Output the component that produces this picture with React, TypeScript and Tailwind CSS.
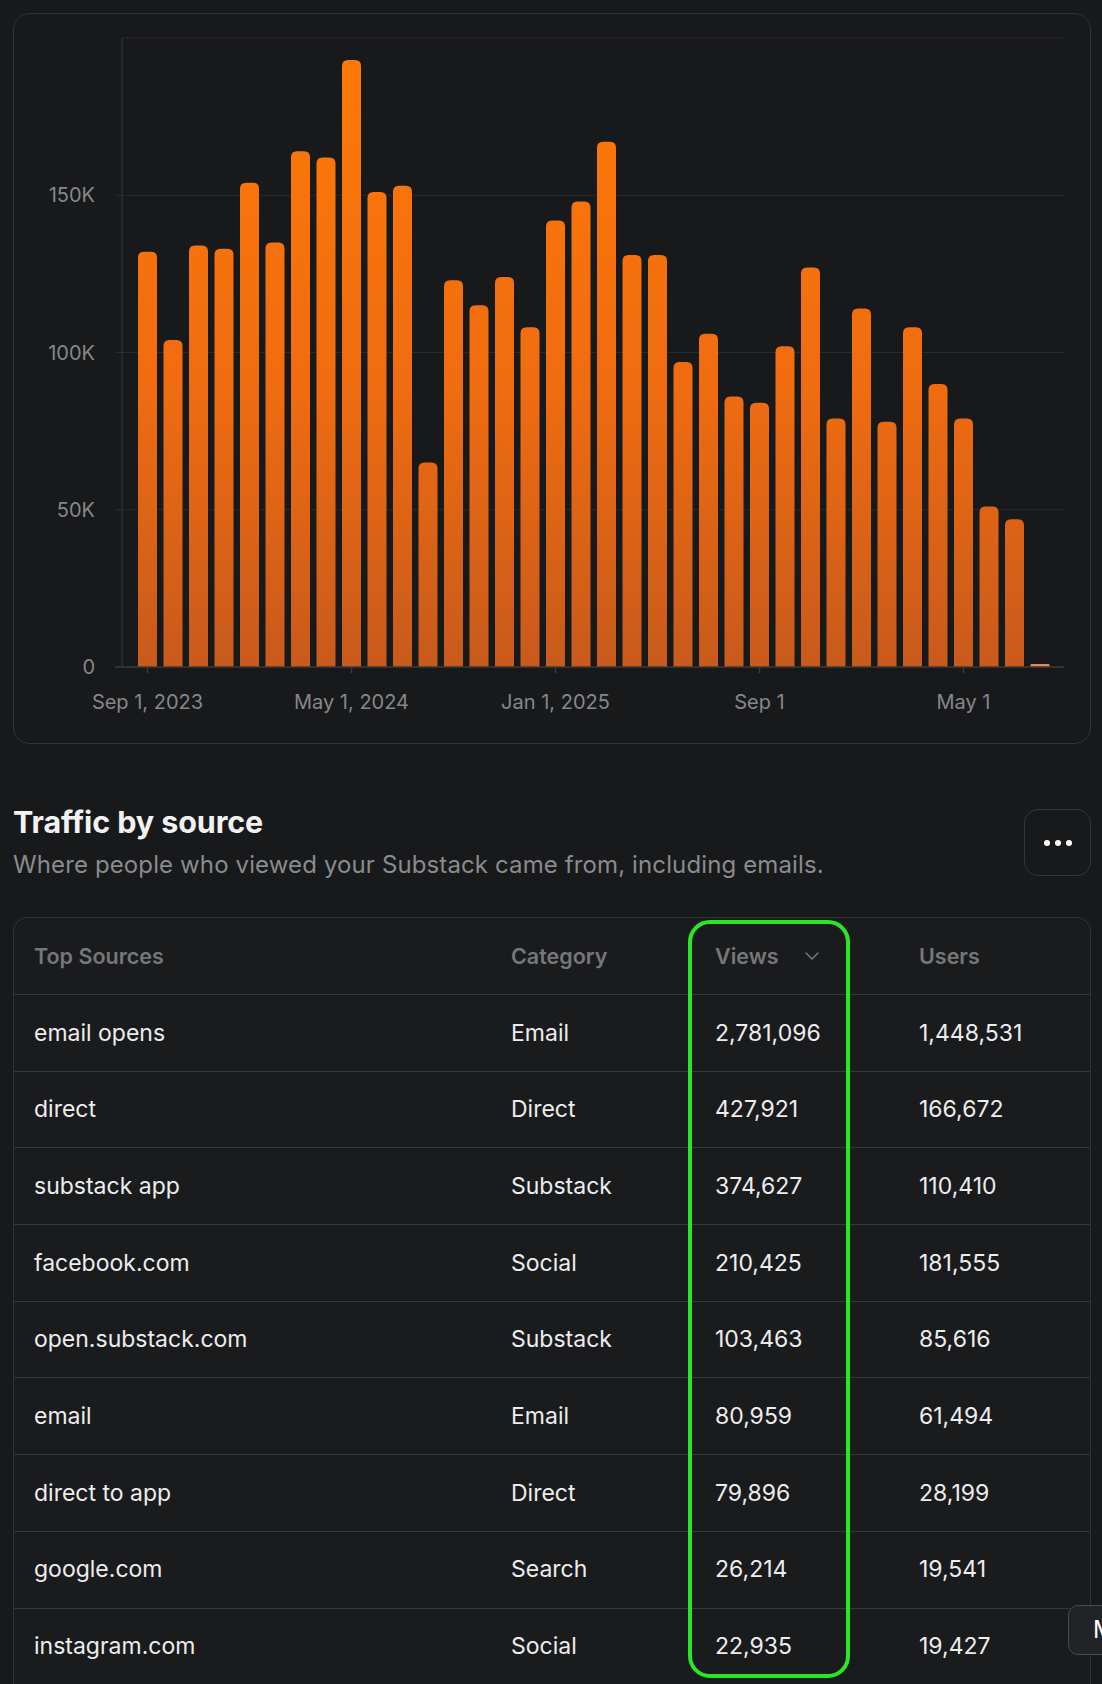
import React from 'react';
import { ChevronDown } from 'lucide-react';

// monthly views in thousands, Sep 2023 onward
const barValues = [
  132, 104, 134, 133, 154, 135, 164, 162, 193, 151, 153, 65, 123, 115, 124, 108, 142, 148,
  167, 131, 131, 97, 106, 86, 84, 102, 127, 79, 114, 78, 108, 90, 79, 51, 47, 0.7,
];

const rows = [
  { source: 'email opens', category: 'Email', views: '2,781,096', users: '1,448,531' },
  { source: 'direct', category: 'Direct', views: '427,921', users: '166,672' },
  { source: 'substack app', category: 'Substack', views: '374,627', users: '110,410' },
  { source: 'facebook.com', category: 'Social', views: '210,425', users: '181,555' },
  { source: 'open.substack.com', category: 'Substack', views: '103,463', users: '85,616' },
  { source: 'email', category: 'Email', views: '80,959', users: '61,494' },
  { source: 'direct to app', category: 'Direct', views: '79,896', users: '28,199' },
  { source: 'google.com', category: 'Search', views: '26,214', users: '19,541' },
  { source: 'instagram.com', category: 'Social', views: '22,935', users: '19,427' },
];

const PLOT_TOP = 38;
const BASE = 667;
const AXIS_X = 122;
const PLOT_RIGHT = 1064;
const FIRST_BAR = 138;
const STEP = 25.5;
const BAR_W = 19;

const yTicks = [
  { label: '150K', v: 150 },
  { label: '100K', v: 100 },
  { label: '50K', v: 50 },
  { label: '0', v: 0 },
];

const xTicks = [
  { label: 'Sep 1, 2023', i: 0 },
  { label: 'May 1, 2024', i: 8 },
  { label: 'Jan 1, 2025', i: 16 },
  { label: 'Sep 1', i: 24 },
  { label: 'May 1', i: 32 },
];

const yFor = (v: number) => BASE - (v / 200) * (BASE - PLOT_TOP);

const barPath = (x: number, top: number) => {
  const h = BASE - top;
  const r = Math.min(6, h / 2, BAR_W / 2);
  return `M${x},${BASE} L${x},${top + r} Q${x},${top} ${x + r},${top} L${x + BAR_W - r},${top} Q${x + BAR_W},${top} ${x + BAR_W},${top + r} L${x + BAR_W},${BASE} Z`;
};

const ViewsChart: React.FC = () => (
  <svg className="block w-full h-full" viewBox="14 14 1076 729" fontFamily="Inter, 'Liberation Sans', sans-serif">
    <defs>
      <linearGradient id="barFill" gradientUnits="userSpaceOnUse" x1="0" y1={PLOT_TOP} x2="0" y2={BASE}>
        <stop offset="0" stopColor="#ff7a06" />
        <stop offset="0.55" stopColor="#f06c10" />
        <stop offset="1" stopColor="#c85a1c" />
      </linearGradient>
    </defs>

    {/* grid */}
    {[200, 150, 100, 50].map((v) => (
      <line key={v} x1={v === 200 ? AXIS_X : AXIS_X - 7} x2={PLOT_RIGHT} y1={yFor(v)} y2={yFor(v)} stroke="#2a2b2e" strokeWidth="1" />
    ))}
    <line x1={AXIS_X} x2={AXIS_X} y1={PLOT_TOP} y2={BASE} stroke="#37383b" strokeWidth="1" />

    {yTicks.map((t) => (
      <text key={t.label} x="95" y={yFor(t.v) + 7} textAnchor="end" fontSize="20" fill="#86878a">
        {t.label}
      </text>
    ))}

    {/* bars */}
    {barValues.map((v, i) => {
      const x = FIRST_BAR + i * STEP;
      if (v < 2) {
        return <rect key={i} x={x} y={BASE - 3} width={BAR_W} height={3} rx={1} fill="#e98a55" />;
      }
      return <path key={i} d={barPath(x, yFor(v))} fill="url(#barFill)" />;
    })}

    <line x1={AXIS_X - 7} x2={PLOT_RIGHT} y1={BASE} y2={BASE} stroke="#3a3b3e" strokeWidth="1.5" />

    {xTicks.map((t) => {
      const cx = FIRST_BAR + t.i * STEP + BAR_W / 2;
      return (
        <g key={t.label}>
          <line x1={cx} x2={cx} y1={BASE} y2={BASE + 6} stroke="#3a3b3e" strokeWidth="1.5" />
          <text x={cx} y="709" textAnchor="middle" fontSize="20" fill="#86878a">
            {t.label}
          </text>
        </g>
      );
    })}
  </svg>
);

export default function App() {
  return (
    <div className="relative min-h-[1684px] overflow-hidden bg-[#18191b] pl-[13px] pr-[11px] pt-[13px] font-['Inter','Liberation_Sans',sans-serif] text-[#ededee]">
      {/* chart card */}
      <div className="h-[731px] rounded-[16px] border border-[#323336]">
        <ViewsChart />
      </div>

      {/* section header */}
      <div className="mt-[60px] flex items-center justify-between">
        <div>
          <h2 className="text-[30.5px] font-bold leading-[36px] tracking-[-0.1px] text-[#f2f2f3]">Traffic by source</h2>
          <p className="mt-[9px] text-[24px] leading-[32px] tracking-[0.12px] text-[#8a8b8e]">
            Where people who viewed your Substack came from, including emails.
          </p>
        </div>
        <button className="flex h-[67px] w-[67px] items-center justify-center gap-[5px] rounded-[14px] border border-[#36373a]">
          <span className="h-[6px] w-[6px] rounded-full bg-white" />
          <span className="h-[6px] w-[6px] rounded-full bg-white" />
          <span className="h-[6px] w-[6px] rounded-full bg-white" />
        </button>
      </div>

      {/* table */}
      <div className="relative mt-[36px] rounded-t-[14px] border border-[#323336] bg-[#1a1b1d]">
        <div className="grid h-[76px] grid-cols-[477px_204px_204px_1fr] items-center text-[21.5px] font-semibold text-[#76777b]">
          <div className="pl-[20px]">Top Sources</div>
          <div className="pl-[20px]">Category</div>
          <div className="flex items-center pl-[20px]">
            Views
            <ChevronDown className="ml-[21px] h-[24px] w-[24px] text-[#76777b]" strokeWidth={1.5} />
          </div>
          <div className="pl-[20px]">Users</div>
        </div>
        {rows.map((r) => (
          <div
            key={r.source}
            className="grid h-[76.7px] grid-cols-[477px_204px_204px_1fr] items-center border-t border-[#36373a] text-[23px] text-[#ededee]"
          >
            <div className="pl-[20px]">{r.source}</div>
            <div className="pl-[20px]">{r.category}</div>
            <div className="pl-[20px]">{r.views}</div>
            <div className="pl-[20px]">{r.users}</div>
          </div>
        ))}

        {/* highlight around the Views column */}
        <div className="pointer-events-none absolute left-[674px] top-[2px] h-[758px] w-[162px] rounded-[22px] border-[4px] border-[#2ae626]" />
      </div>

      {/* floating button peeking in from the right */}
      <div className="absolute left-[1068px] top-[1605px] flex h-[50px] w-[80px] items-center rounded-[10px] border-[1.5px] border-[#4a4b4e] bg-[#222326] pl-[24px] text-[24px] text-white">
        M
      </div>
    </div>
  );
}
